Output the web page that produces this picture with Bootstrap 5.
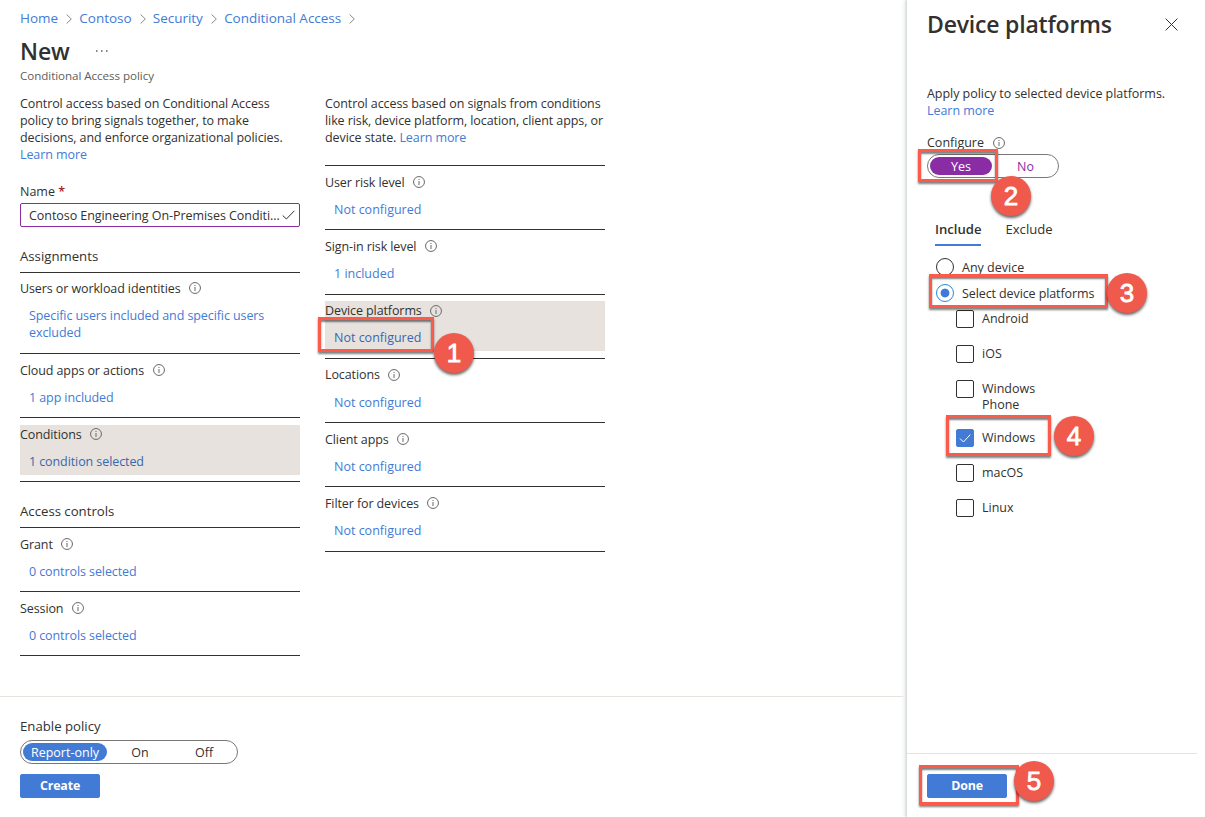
<!DOCTYPE html>
<html lang="en">
<head>
<meta charset="utf-8">
<title>New - Conditional Access policy</title>
<link href="https://cdn.jsdelivr.net/npm/bootstrap@5.3.0/dist/css/bootstrap.min.css" rel="stylesheet">
<style>
:root{--ink:#323130;--azure:#427bd6;--purple:#8a2da5;--hot:#fc5a4b}
body{font-family:"Open Sans","Noto Sans",sans-serif;font-size:12.5px;line-height:17px;color:var(--ink);background:#fff;overflow:hidden;height:817px}
a{color:var(--azure);text-decoration:none}
svg{display:block;flex:none}
.blade{width:907px}
.crumbs{height:20px;margin-top:8px;padding-left:20px;font-size:13.5px;line-height:20px;letter-spacing:-.03px}
.crumbs svg{margin:1px 7px 0 8.3px}
h1,h2{font-size:23px;line-height:32px;font-weight:600;letter-spacing:-.1px}
h2{letter-spacing:-.2px}
.head-row{padding-left:20px;margin-top:7px;height:32px}
.sub-title{font-size:11.6px;line-height:16px;color:#605e5c;padding:1px 0 0 20px;letter-spacing:-.05px}
.cols{padding-left:20px;margin-top:11px;gap:25px}
.col-pane{width:280px}
.intro{white-space:nowrap;letter-spacing:-.09px}
.side .intro{letter-spacing:-.04px}
.name-box{width:280px;height:24px;border:1px solid var(--purple);border-radius:2px;padding:0 4px 0 8px;white-space:nowrap;letter-spacing:-.06px}
.req{color:#a4262c;font-weight:600}
.sect{font-size:13.2px;line-height:18px;border-bottom:1px solid var(--ink);padding:20px 0 7px}
.setting{border-bottom:1px solid var(--ink);padding:7px 0 6px;min-height:64px}
.setting.lead-item{padding:6px 0 7px}
.conds .setting{padding-bottom:6.25px;min-height:64.25px}
.conds .setting.on{padding:6px 0 7.25px}
.setting .inner{min-height:50px;position:relative}
.setting.on .inner{background:#e7e2de}
.setting.on a{color:#3767ae}
.setting .ttl{line-height:18px;height:18px;display:flex;align-items:center;gap:8.5px;white-space:nowrap;padding-top:1px;letter-spacing:-.1px}
.setting .ttl svg{margin-top:-1px}
.conds .on .ttl{padding-top:3px}
.setting .val{padding:10px 0 5px 9px;line-height:17px;letter-spacing:-.09px}
.conds .val{letter-spacing:0}
.foot{position:absolute;left:0;top:696px;width:907px;height:121px;border-top:1px solid #e7e2de;padding:20px 0 0 20px}
.seg{border:1px solid #7a7876;border-radius:12px;height:24px;padding:2px;display:flex;align-items:center}
.seg span{height:18px;line-height:19px;border-radius:9px;text-align:center;white-space:nowrap;flex:none}
.seg-blue .sel{background:var(--azure);color:#fff}
.seg-purple{color:var(--purple)}
.seg-purple .sel{background:var(--purple);color:#fff}
.act{width:80px;height:24px;padding:0;font-size:12.4px;line-height:22px;font-weight:700;letter-spacing:-.15px;border-radius:2px;background:var(--azure);border:1px solid var(--azure);color:#fff;display:block;text-align:center}
.side{width:298px;height:817px;background:#fff;position:relative;box-shadow:-1px 0 2px #ccd1d1,-4px 0 3px #f1f4f4}
.side-body{padding-left:20px}
.tabs{padding-left:8px;gap:24px;font-size:13.1px}
.tabs div{height:26px;line-height:18px;border-bottom:2px solid transparent;white-space:nowrap}
.tabs .cur{font-weight:600;border-color:var(--azure)}
.pick{display:flex;gap:8px;line-height:16px}
.plats .pick>span:last-of-type{padding-top:1px}
.dot{width:18px;height:18px;border:1px solid var(--ink);border-radius:50%;flex:none}
.dot.sel{border-color:#2b88d8;background:radial-gradient(circle,var(--azure) 4px,#fff 4.8px)}
.tick{width:18px;height:18px;border:1px solid var(--ink);border-radius:2px;flex:none}
.tick.sel{background:var(--azure);border-color:var(--azure)}
.side-foot{position:absolute;left:0;top:753px;width:290px;height:64px;border-top:1px solid #e7e2de;padding:20px 0 0 20px}
.frame{position:absolute;border:3px solid var(--hot);box-shadow:0 2px 2px rgba(0,0,0,.5),inset 0 2px 2px rgba(0,0,0,.5);z-index:2}
.step{position:absolute;width:40px;height:40px;border-radius:50%;background:#ef5a4c;color:#fff;font:26px/41px "Liberation Sans",sans-serif;-webkit-text-stroke:.8px #fff;text-align:center;box-shadow:0 2px 3px rgba(0,0,0,.6);z-index:3}
</style>
</head>
<body>
<svg width="0" height="0" class="position-absolute">
<symbol id="info" viewBox="0 0 12 12"><circle cx="6" cy="6" r="5.45" fill="none" stroke="#6b6967"/><path d="M6 5v4M6 3v1" stroke="#6b6967" stroke-width="1"/></symbol>
<symbol id="chev" viewBox="0 0 6 10"><path d="M.6.5 5.3 5 .6 9.5" fill="none" stroke="#8a8886"/></symbol>
</svg>
<div class="d-flex">
<main class="blade position-relative">
<nav class="crumbs d-flex align-items-center"><a href="#">Home</a><svg width="6" height="10"><use href="#chev"/></svg><a href="#">Contoso</a><svg width="6" height="10"><use href="#chev"/></svg><a href="#">Security</a><svg width="6" height="10"><use href="#chev"/></svg><a href="#">Conditional Access</a><svg width="6" height="10"><use href="#chev"/></svg></nav>
<div class="head-row d-flex align-items-center"><h1 class="m-0">New</h1><svg style="margin:1px 0 0 25px" width="13" height="3" viewBox="0 0 13 3"><path d="M1 1h1.5M6 1h1.5M11 1h1.5" stroke="#605e5c" stroke-width="1.4"/></svg></div>
<div class="sub-title">Conditional Access policy</div>
<div class="cols d-flex">
<section class="col-pane">
<div class="intro">Control access based on Conditional Access<br>policy to bring signals together, to make<br>decisions, and enforce organizational policies.<br><a href="#">Learn more</a></div>
<div class="mt-3 pt-1" style="margin-bottom:3px">Name <span class="req">*</span></div>
<div class="name-box d-flex align-items-center"><span>Contoso Engineering On-Premises Conditi...</span><svg class="ms-auto" width="13" height="10" viewBox="0 0 13 10"><path d="M.7 5.5 4.4 9 12.3.8" fill="none" stroke="#323130"/></svg></div>
<div class="sect">Assignments</div>
<div class="setting lead-item"><div class="inner"><div class="ttl">Users or workload identities <svg width="12" height="12"><use href="#info"/></svg></div><div class="val"><a href="#">Specific users included and specific users<br>excluded</a></div></div></div>
<div class="setting"><div class="inner"><div class="ttl">Cloud apps or actions <svg width="12" height="12"><use href="#info"/></svg></div><div class="val"><a href="#">1 app included</a></div></div></div>
<div class="setting on"><div class="inner"><div class="ttl">Conditions <svg width="12" height="12"><use href="#info"/></svg></div><div class="val"><a href="#">1 condition selected</a></div></div></div>
<div class="sect">Access controls</div>
<div class="setting"><div class="inner"><div class="ttl">Grant <svg width="12" height="12"><use href="#info"/></svg></div><div class="val"><a href="#">0 controls selected</a></div></div></div>
<div class="setting"><div class="inner"><div class="ttl">Session <svg width="12" height="12"><use href="#info"/></svg></div><div class="val"><a href="#">0 controls selected</a></div></div></div>
</section>
<section class="col-pane conds">
<div class="intro">Control access based on signals from conditions<br>like risk, device platform, location, client apps, or<br>device state. <a href="#">Learn more</a></div>
<div class="border-bottom" style="height:20px;border-color:#323130!important"></div>
<div class="setting"><div class="inner"><div class="ttl">User risk level <svg width="12" height="12"><use href="#info"/></svg></div><div class="val"><a href="#">Not configured</a></div></div></div>
<div class="setting"><div class="inner"><div class="ttl">Sign-in risk level <svg width="12" height="12"><use href="#info"/></svg></div><div class="val"><a href="#">1 included</a></div></div></div>
<div class="setting on"><div class="inner"><div class="ttl">Device platforms <svg width="12" height="12"><use href="#info"/></svg></div><div class="val"><a href="#">Not configured</a></div><div class="frame" style="left:-7px;top:16px;width:116px;height:35px"></div><div class="step" style="left:109px;top:32px">1</div></div></div>
<div class="setting"><div class="inner"><div class="ttl">Locations <svg width="12" height="12"><use href="#info"/></svg></div><div class="val"><a href="#">Not configured</a></div></div></div>
<div class="setting"><div class="inner"><div class="ttl">Client apps <svg width="12" height="12"><use href="#info"/></svg></div><div class="val"><a href="#">Not configured</a></div></div></div>
<div class="setting"><div class="inner"><div class="ttl">Filter for devices <svg width="12" height="12"><use href="#info"/></svg></div><div class="val"><a href="#">Not configured</a></div></div></div>
</section>
</div>
<div class="foot">
<div style="line-height:19px;margin-bottom:4px;font-size:13.2px">Enable policy</div>
<div class="seg seg-blue" style="width:218px"><span class="sel" style="width:84px">Report-only</span><span style="width:66px">On</span><span style="width:62px">Off</span></div>
<button class="act btn" style="margin-top:10px">Create</button>
</div>
</main>
<aside class="side">
<div class="side-body">
<div class="d-flex align-items-center" style="padding-top:8px"><h2 class="m-0" style="width:237.5px">Device platforms</h2><svg width="13" height="13" viewBox="0 0 13 13"><path d="M.6.6l11.8 11.8M12.4.6.6 12.4" stroke="#323130"/></svg></div>
<div class="intro" style="margin-top:45px">Apply policy to selected device platforms.<br><a href="#">Learn more</a></div>
<div class="d-flex align-items-center" style="margin-top:15px;gap:9px;height:18px"><span style="margin-top:-1px">Configure</span> <svg width="12" height="12"><use href="#info"/></svg></div>
<div class="position-relative" style="margin-top:2px"><div class="seg seg-purple" style="width:132px"><span class="sel" style="width:62px">Yes</span><span style="width:67px">No</span></div><div class="frame" style="left:-9px;top:-5px;width:80px;height:33px"></div><div class="step" style="left:64px;top:22px">2</div></div>
<div class="tabs d-flex" style="margin-top:42px"><div class="cur">Include</div><div>Exclude</div></div>
<div class="position-relative" style="padding:12px 0 0 9px">
<div class="pick"><span class="dot"></span><span style="padding-top:2px">Any device</span></div>
<div class="pick" style="margin-top:8px"><span class="dot sel"></span><span style="padding-top:2px;letter-spacing:-.1px">Select device platforms</span></div>
<div class="frame" style="left:2px;top:28px;width:179px;height:34px"></div><div class="step" style="left:180px;top:27px">3</div>
</div>
<div class="plats" style="padding:8px 0 0 29px">
<div class="pick" style="height:35px"><span class="tick"></span><span>Android</span></div>
<div class="pick" style="height:35px"><span class="tick"></span><span>iOS</span></div>
<div class="pick" style="height:49px"><span class="tick"></span><span>Windows<br>Phone</span></div>
<div class="pick position-relative" style="height:35px"><span class="tick sel"><svg width="16" height="16" viewBox="0 0 16 16"><path d="M3 8.5 6.4 12 13.3 4.6" fill="none" stroke="#fff"/></svg></span><span>Windows</span><div class="frame" style="left:-10px;top:-14px;width:105px;height:41px"></div><div class="step" style="left:98px;top:-13px">4</div></div>
<div class="pick" style="height:35px"><span class="tick"></span><span>macOS</span></div>
<div class="pick" style="height:35px"><span class="tick"></span><span>Linux</span></div>
</div>
</div>
<div class="side-foot"><button class="act btn">Done</button><div class="frame" style="left:12px;top:11px;width:100px;height:40px"></div><div class="step" style="left:107px;top:7px">5</div></div>
</aside>
</div>
<script src="https://cdn.jsdelivr.net/npm/bootstrap@5.3.0/dist/js/bootstrap.bundle.min.js"></script>
</body>
</html>
